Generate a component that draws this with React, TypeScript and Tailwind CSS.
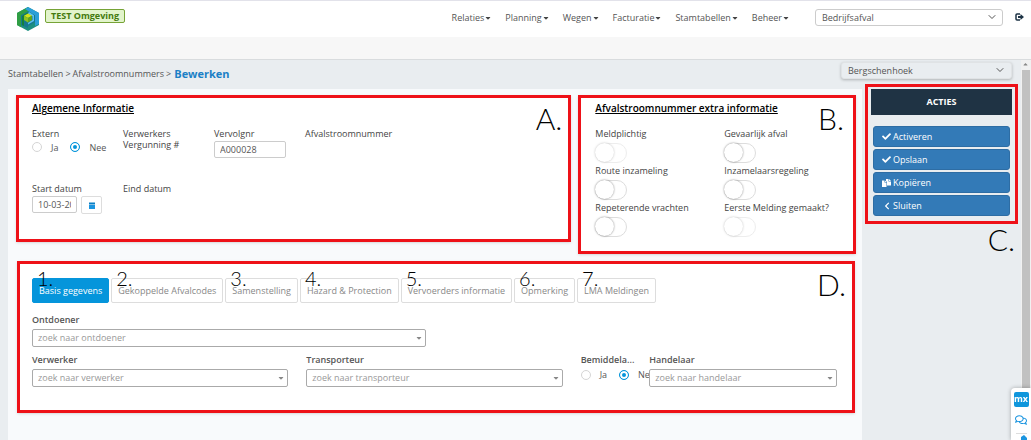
import { useState } from "react"
import type { ReactNode } from "react"
import { FaCaretDown, FaCheck, FaChevronLeft, FaRegComments } from "react-icons/fa"
import { FiChevronDown } from "react-icons/fi"

const menu = ["Relaties", "Planning", "Wegen", "Facturatie", "Stamtabellen", "Beheer"]

const tabs = [
    "Basis gegevens",
    "Gekoppelde Afvalcodes",
    "Samenstelling",
    "Hazard & Protection",
    "Vervoerders informatie",
    "Opmerking",
    "LMA Meldingen",
]

const toggles = [
    { label: "Meldplichtig", disabled: true },
    { label: "Gevaarlijk afval", disabled: false },
    { label: "Route inzameling", disabled: false },
    { label: "Inzamelaarsregeling", disabled: false },
    { label: "Repeterende vrachten", disabled: false },
    { label: "Eerste Melding gemaakt?", disabled: true },
]

const Logo = () => (
    <svg viewBox="0 0 22 24" className="w-[22px] h-[24px]" aria-hidden="true">
        <path d="M11 0 L0 6 V18 L11 24 L22 18 V6 Z" fill="#1d8f80" />
        <path d="M11 0 L0 6 V18 L4 20.200 V8.400 L11 4.500 Z" fill="#2f9e44" />
        <path d="M11 0 L22 6 V17 L18 19 V8.400 L8 2 Z" fill="#2a9fd8" />
        <path d="M4 8.400 L11 4.500 L18 8.400 V15 L11 19 V21 L4 18 Z" fill="#16788f" />
        <path d="M5 9 L11 5.500 L12 7 L7 9.600 V19 L5 18 Z" fill="#14803c" />
        <path d="M12 5 L17 8.200 V14 L11 17.500 V15.800 L15.500 13 V9.200 L11 6.800 Z" fill="#5cc0f0" />
        <path d="M11 6.500 L15 8.700 L11 11 L7 8.700 Z" fill="#d3e21b" />
        <path d="M7 8.700 L11 11 V15.400 L7 13 Z" fill="#8cc21f" />
        <path d="M15 8.700 L11 11 V15.400 L15 13 Z" fill="#5fa51c" />
    </svg>
)

const LogoutIcon = () => (
    <svg viewBox="0 0 18 16" className="w-[9px] h-[8px]" aria-hidden="true">
        <path d="M10 2 H4 Q2 2 2 4 V12 Q2 14 4 14 H10" fill="none" stroke="currentColor" strokeWidth="3" />
        <path d="M6 6 H11 V2 L18 8 L11 14 V10 H6 Z" fill="currentColor" />
    </svg>
)

const CopyIcon = () => (
    <svg viewBox="0 0 18 16" className="w-[9px] h-[8px]" fill="currentColor" aria-hidden="true">
        <path d="M0 3 H5 V7 H9 V16 H0 Z" />
        <path d="M6 3 L9 6 H6 Z" />
        <path d="M8 0 H13 V5 H18 V13 H10 V6 L8 4 Z" />
        <path d="M14 0 L18 4 H14 Z" />
    </svg>
)

const CalendarIcon = () => (
    <svg viewBox="0 0 12 14" className="w-[6px] h-[7px]" aria-hidden="true">
        <path d="M0 1 H12 V5 H0 Z" fill="#0a7fc4" />
        <path d="M0 6 H12 V14 H0 Z" fill="#1b95e0" />
    </svg>
)

const Mark = ({ children, className }: { children: ReactNode; className: string }) => (
    <span className={`absolute z-10 font-['Lato'] font-light text-black pointer-events-none ${className}`}>{children}</span>
)

const Search = ({ id, label, className }: { id: string; label: string; className: string }) => (
    <div className={`pr-[18px] ${className}`}>
        <label htmlFor={id} className="block font-semibold leading-[12px] mb-[3px]">{label}</label>
        <div className="relative">
            <select id={id} className="block appearance-none w-full h-[18px] px-[5px] border border-[#aaa] rounded-[2px] bg-white text-[#999]">
                <option>zoek naar {label.toLowerCase()}</option>
            </select>
            <FaCaretDown size={8} className="absolute right-[3px] top-[5px] text-[#888] pointer-events-none" />
        </div>
    </div>
)

const YesNo = ({ name }: { name: string }) => (
    <div className="flex items-center whitespace-nowrap h-[12px]">
        {["Ja", "Nee"].map((option) => (
            <label key={option} className="flex items-center mr-3">
                <input
                    type="radio"
                    name={name}
                    defaultChecked={option === "Nee"}
                    className="appearance-none shrink-0 size-[10px] mr-[9px] rounded-full border border-[#d5d5d5] bg-white checked:border-[#0595db] checked:bg-[#0595db] checked:shadow-[inset_0_0_0_2px_#fff]"
                />
                {option}
            </label>
        ))}
    </div>
)

const ActionButton = ({ icon, children }: { icon: ReactNode; children: ReactNode }) => (
    <button type="button" className="flex items-center gap-[2px] h-[21px] px-2 rounded-[3px] bg-[#337ab7] border border-[#2e6da4] text-white text-[9px]">
        <span className="flex justify-center w-[9px]">{icon}</span>
        {children}
    </button>
)

const App = () => {
    const [active, setActive] = useState(0)

    return (
        <div className="flex flex-col min-h-screen bg-[#e9edf0] font-['Open_Sans',sans-serif] text-[9px] leading-[12px] text-[#555]">
            <header className="flex items-start h-[37px] pr-[7px] bg-white border-t border-[#e2e2ea]">
                <a href="#" className="ml-[17px] mt-[6px]" aria-label="Home"><Logo /></a>
                <span className="ml-[6px] mt-2 px-[5px] h-[14px] border border-[#76a336] rounded-[2px] bg-[#e2f4cb] text-[#447a0e] font-bold">TEST Omgeving</span>
                <nav className="flex gap-[13px] ml-auto mt-[11px]">
                    {menu.map((item) => (
                        <a key={item} href="#" className="flex items-center">
                            {item}
                            <FaCaretDown size={8} className="text-[#444]" />
                        </a>
                    ))}
                </nav>
                <div className="relative w-[188px] ml-[25px] mt-2">
                    <select aria-label="Afdeling" className="block appearance-none w-full h-[17px] px-[6px] border border-[#ccc] rounded-[3px] bg-white">
                        <option>Bedrijfsafval</option>
                    </select>
                    <FiChevronDown size={12} className="absolute right-[5px] top-[2px] pointer-events-none" />
                </div>
                <button type="button" aria-label="Uitloggen" className="ml-3 mt-3 text-[#1d3345]"><LogoutIcon /></button>
            </header>
            <div className="h-[23px] bg-[#f7f7f7] border-b border-[#d9dcde]" />

            <div className="flex flex-1">
                <div className="flex flex-col flex-1 min-w-0">
                    <div className="flex items-start justify-between h-6 pl-2 pr-[9px]">
                        <div className="flex items-center gap-[2px] h-[27px]">
                            <a href="#">Stamtabellen</a>
                            <span>&gt;</span>
                            <a href="#">Afvalstroomnummers</a>
                            <span>&gt;</span>
                            <h1 className="ml-px text-[11px] font-bold text-[#1b80c6]">Bewerken</h1>
                        </div>
                        <div className="relative w-[171px] mt-[2px]">
                            <select aria-label="Vestiging" className="block appearance-none w-full h-[17px] px-[6px] border border-[#e0e3e5] rounded-[3px] bg-[#e9edf0] shadow-[0_1px_3px_rgba(0,0,0,0.25)]">
                                <option>Bergschenhoek</option>
                            </select>
                            <FiChevronDown size={12} className="absolute right-[6px] top-[2px] pointer-events-none" />
                        </div>
                    </div>

                    <div className="flex flex-1">
                        <main className="flex-1 min-w-0 mt-[5px] ml-2 pt-[6px] pl-2 pr-[6px] bg-[#f8fafc]">
                            <div className="grid grid-cols-[2fr_1fr] items-start gap-[7px]">
                                <section className="relative h-[147px] border-[3px] border-[#ee1118] bg-white pl-[13px] pt-[3px] shadow-sm">
                                    <Mark className="right-[6px] top-[2px] text-[30px] leading-[36px]">A.</Mark>
                                    <h2 className="text-[10px] leading-[14px] font-semibold underline text-black">Algemene Informatie</h2>
                                    <div className="grid grid-cols-[repeat(3,90px)_1fr] grid-rows-[55px_auto] gap-x-px mt-[13px] leading-[11px]">
                                        <fieldset>
                                            <legend className="font-medium text-[#444] mb-[2px]">Extern</legend>
                                            <YesNo name="extern" />
                                        </fieldset>
                                        <div className="font-medium text-[#444]">Verwerkers<br />Vergunning #</div>
                                        <div>
                                            <label htmlFor="vervolgnr" className="block font-medium text-[#444] mb-[2px]">Vervolgnr</label>
                                            <input id="vervolgnr" defaultValue="A000028" className="block w-[72px] h-[17px] px-[5px] border border-[#ccc] rounded-[2px]" />
                                        </div>
                                        <div className="font-medium text-[#444]">Afvalstroomnummer</div>
                                        <div>
                                            <label htmlFor="start" className="block font-medium text-[#444] mb-[2px]">Start datum</label>
                                            <div className="flex gap-1">
                                                <input id="start" defaultValue="10-03-2021" className="w-[45px] h-[17px] px-[5px] border border-[#ccc] rounded-[2px]" />
                                                <button type="button" aria-label="Kies datum" className="flex items-center justify-center w-[21px] h-[18px] border border-[#ddd] rounded-[2px]">
                                                    <CalendarIcon />
                                                </button>
                                            </div>
                                        </div>
                                        <div className="font-medium text-[#444]">Eind datum</div>
                                    </div>
                                </section>

                                <section className="relative h-[159px] border-[3px] border-[#ee1118] bg-white pl-[14px] pt-[3px] shadow-sm">
                                    <Mark className="right-[9px] top-[2px] text-[30px] leading-[36px]">B.</Mark>
                                    <h2 className="text-[10px] leading-[14px] font-semibold underline text-black">Afvalstroomnummer extra informatie</h2>
                                    <div className="grid grid-cols-2 gap-y-[6px] mt-[13px] leading-[11px]">
                                        {toggles.map((toggle) => (
                                            <label key={toggle.label} className="block font-medium text-[#444] whitespace-nowrap">
                                                {toggle.label}
                                                <input
                                                    type="checkbox"
                                                    role="switch"
                                                    disabled={toggle.disabled}
                                                    className="block appearance-none w-[32px] h-[20px] mt-[4px] -mb-[4px] rounded-full border border-[#ddd] disabled:opacity-50 before:block before:size-[19px] before:-mt-px before:-ml-px before:rounded-full before:bg-white before:shadow-[0_0_2px_rgba(0,0,0,0.5)]"
                                                />
                                            </label>
                                        ))}
                                    </div>
                                </section>
                            </div>

                            <section className="relative h-[152px] ml-px mr-px mt-[7px] border-[3px] border-[#ee1118] bg-white pl-3 pt-[14px] shadow-sm">
                                <Mark className="right-[6px] top-[2px] text-[30px] leading-[36px]">D.</Mark>
                                <div role="tablist" className="flex gap-[2px]">
                                    {tabs.map((tab, i) => (
                                        <button
                                            key={tab}
                                            type="button"
                                            role="tab"
                                            aria-selected={active === i}
                                            onClick={() => setActive(i)}
                                            className="relative h-[25px] px-[6px] border border-[#ddd] rounded-[2px] bg-white text-[#888] whitespace-nowrap aria-selected:bg-[#0595db] aria-selected:border-[#0595db] aria-selected:text-white"
                                        >
                                            <Mark className="left-[4px] -top-[13px] text-[20px] leading-[24px]">{i + 1}.</Mark>
                                            {tab}
                                        </button>
                                    ))}
                                </div>
                                <div className="grid grid-cols-12 gap-y-[7px] mt-[11px] -mr-[3px]">
                                    <Search id="ontdoener" label="Ontdoener" className="col-span-6" />
                                    <Search id="verwerker" label="Verwerker" className="col-span-4 col-start-1" />
                                    <Search id="transporteur" label="Transporteur" className="col-span-4" />
                                    <fieldset className="min-w-0">
                                        <legend className="w-full truncate font-semibold mb-[3px]">Bemiddela...</legend>
                                        <YesNo name="bemiddelaar" />
                                    </fieldset>
                                    <Search id="handelaar" label="Handelaar" className="relative col-span-3" />
                                </div>
                            </section>
                        </main>

                        <aside className="w-[159px] px-[3px]">
                            <div className="relative h-[140px] border-[3px] border-[#ee1118] px-[3px] pt-[2px]">
                                <h2 className="h-[26px] bg-[#1f3344] text-center text-[9px] leading-[26px] font-bold text-white">ACTIES</h2>
                                <div className="flex flex-col gap-[2px] mt-[11px] px-[2px]">
                                    <ActionButton icon={<FaCheck size={9} />}>Activeren</ActionButton>
                                    <ActionButton icon={<FaCheck size={9} />}>Opslaan</ActionButton>
                                    <ActionButton icon={<CopyIcon />}>Kopiëren</ActionButton>
                                    <ActionButton icon={<FaChevronLeft size={8} />}>Sluiten</ActionButton>
                                </div>
                                <Mark className="right-0 top-full text-[30px] leading-[36px]">C.</Mark>
                            </div>
                        </aside>
                    </div>
                </div>

                <div className="w-[10px] bg-[#f1f1f1]" aria-hidden="true">
                    <div className="flex items-center justify-center h-[10px] rotate-180 text-[#888]"><FaCaretDown size={7} /></div>
                    <div className="h-[340px] mx-px bg-[#c1c1c1]" />
                </div>
            </div>

            <div className="fixed right-0 bottom-0 flex flex-col items-center gap-[7px] w-[20px] h-[52px] pt-1 overflow-hidden rounded-tl-[4px] bg-white shadow-[0_0_4px_rgba(0,0,0,0.3)] text-[#1b95e0]">
                <span className="shrink-0 w-[15px] h-[15px] rounded-[2px] bg-[#0f96dc] text-center text-[9px] leading-[14px] font-bold text-white">mx</span>
                <FaRegComments size={12} className="shrink-0" />
                <span className="shrink-0 w-[11px] h-[7px] border-t border-[#ddd]">
                    <svg viewBox="0 0 11 6" className="w-[11px] h-[6px]" fill="#1b95e0" aria-hidden="true"><path d="M5 6 V3 L8 1 L11 4 V6 Z" /></svg>
                </span>
            </div>
        </div>
    )
}
export default App
